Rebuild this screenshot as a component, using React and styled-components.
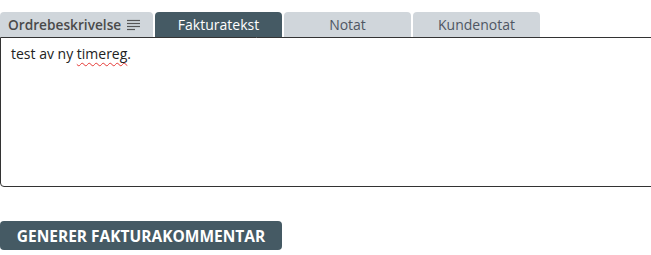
import React from "react";
import styled, { createGlobalStyle } from "styled-components";

const GlobalStyle = createGlobalStyle`
  body {
    margin: 0;
    overflow: hidden;
    background: #fff;
    font-family: "Open Sans", "Liberation Sans", sans-serif;
  }
`;

const tabs = [
  { id: "faktura", label: "Fakturatekst" },
  { id: "notat", label: "Notat" },
  { id: "kunde", label: "Kundenotat" },
];

const NotesIcon = () => (
  <svg width="13" height="12" viewBox="0 0 13 12" fill="none" stroke="#555" strokeWidth="1.2">
    <line x1="0" y1="1.5" x2="13" y2="1.5" />
    <line x1="0" y1="4.5" x2="13" y2="4.5" />
    <line x1="0" y1="7.5" x2="13" y2="7.5" />
    <line x1="0" y1="10.5" x2="8" y2="10.5" />
  </svg>
);

const App = () => {
  const active = "faktura";

  return (
    <Wrapper>
      <GlobalStyle />
      <TabBar>
        <LabelTab>
          Ordrebeskrivelse <NotesIcon />
        </LabelTab>
        {tabs.map((tab) => (
          <Tab key={tab.id} $active={tab.id === active}>
            {tab.label}
          </Tab>
        ))}
      </TabBar>
      <Editor>
        test av ny <Misspelled>timereg</Misspelled>.
      </Editor>
      <GenerateButton>Generer fakturakommentar</GenerateButton>
    </Wrapper>
  );
};

const Wrapper = styled.div`
  padding-top: 12px;
  width: 700px;
`;

const TabBar = styled.div`
  display: flex;
  gap: 2px;
  align-items: flex-end;
`;

const BaseTab = styled.div`
  height: 25px;
  box-sizing: border-box;
  display: flex;
  align-items: center;
  justify-content: center;
  border-radius: 4px 4px 0 0;
  font-size: 14px;
`;

const LabelTab = styled(BaseTab)`
  width: 153px;
  justify-content: flex-start;
  gap: 6px;
  padding-left: 8px;
  background: #d0d6db;
  color: #4a4a4a;
  font-weight: 600;
  font-size: 13.7px;
`;

const Tab = styled(BaseTab)`
  width: 127px;
  background: ${(p) => (p.$active ? "#455a64" : "#d0d6db")};
  color: ${(p) => (p.$active ? "#fff" : "#4f5663")};
`;

const Editor = styled.div`
  height: 150px;
  box-sizing: border-box;
  border: 1px solid #333;
  border-radius: 0 0 0 4px;
  padding: 6px 10px;
  font-size: 14px;
  line-height: 20px;
  color: #222;
`;

const Misspelled = styled.span`
  text-decoration: underline wavy #e53935;
  text-decoration-thickness: 1px;
  text-underline-offset: 3px;
`;

const GenerateButton = styled.button`
  margin-top: 34px;
  width: 282px;
  height: 29px;
  border: none;
  border-radius: 4px;
  background: #455a64;
  color: #fff;
  font-family: "Open Sans", "Liberation Sans", sans-serif;
  font-weight: 700;
  font-size: 15.5px;
  text-transform: uppercase;
  display: flex;
  align-items: center;
  justify-content: center;
  cursor: pointer;
`;

export default App;
